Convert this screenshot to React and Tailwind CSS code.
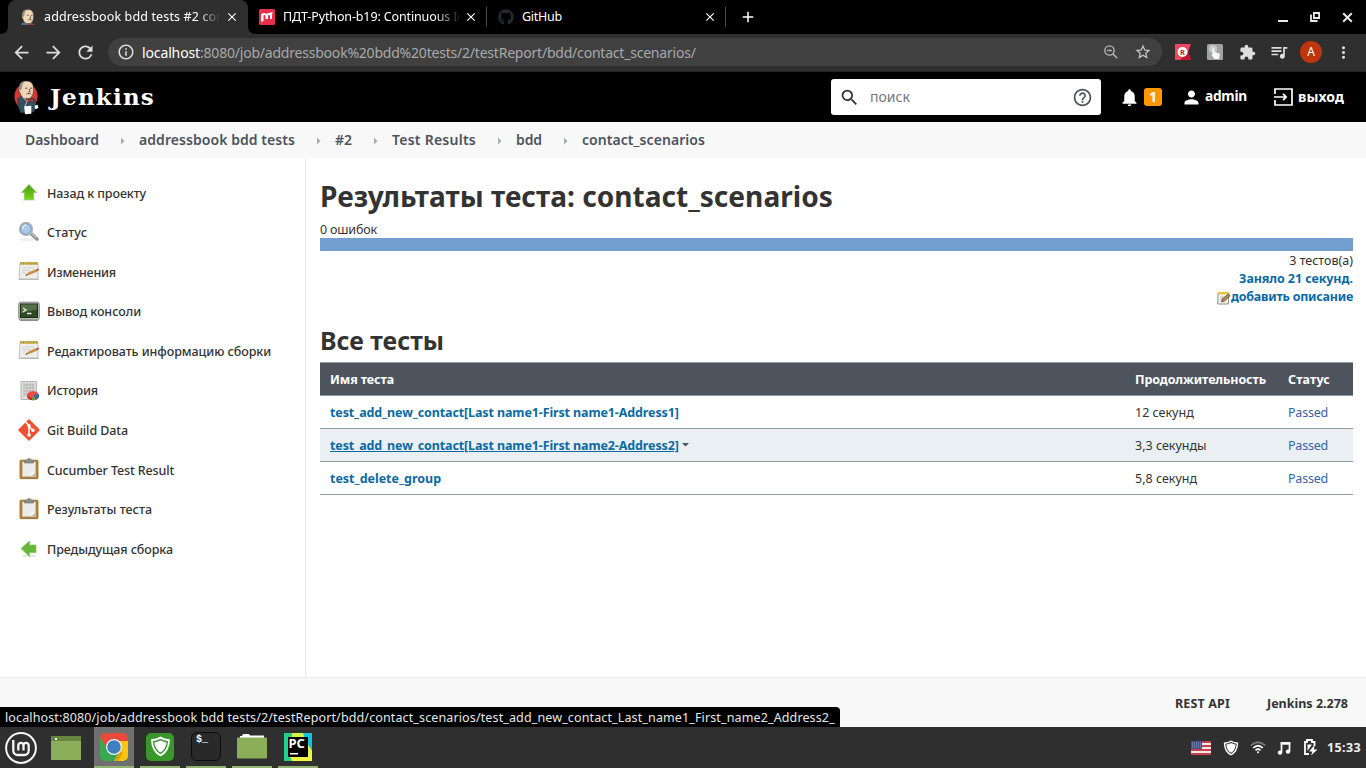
import React from 'react';
import {
  MdArrowBack, MdArrowForward, MdRefresh, MdInfoOutline, MdStarBorder, MdExtension,
  MdQueueMusic, MdMoreVert, MdSearch, MdHelpOutline, MdNotifications, MdPerson, MdClose, MdAdd,
} from 'react-icons/md';
import { FaGithub } from 'react-icons/fa';

function JenkinsHead({ className, full }) {
  return (
    <svg className={className} viewBox={full ? '0 0 26 36' : '4 0 18 21'}>
      {full && <ellipse cx="12.5" cy="17" rx="12" ry="13.5" fill="#d33833" />}
      <path d="M4 19l5-3 8 2 5 2 1 6-2 7-14 1-2-5-1-5z" fill={full ? '#335061' : '#49728b'} stroke="#1d2b33" strokeWidth=".5" />
      <path d="M5.5 8C5.5 3 9 .8 13 .8c5 0 7.300 3 7.300 8 0 6-1.500 10-6 10.500-4 .3-7-2-7.800-6-1.500-1-1.600-3-1-5.300z" fill="#f0d6b7" stroke="#3b3027" strokeWidth=".6" />
      <path d="M5.700 9.500C4.800 4 8 1 12 .8 9 2.500 8.500 5 8.200 8.300L7 11z" fill="#8d8f8c" />
      <path d="M11.500 8.300h2.500M16.700 8.300h2.300M15.800 9l1 3-1.800.3M13 14.500c1.500-1 4-.8 5 .2" fill="none" stroke="#4b3b30" strokeWidth=".9" />
      <path d="M13 18.800l3.500 1.700 3.800-1.500-.3 4-3.500-1.500-3.500 1.800z" fill="#d33833" stroke="#6d1512" strokeWidth=".4" />
      {full && <path d="M10.500 27l7.500-.5V35l-6.500.5z" fill="#fff" />}
      {full && <path d="M21.500 26.500l3-1 1 3.500-3.500 1.200z" fill="#fff" />}
      {full && <path d="M9 17.500l4.500 4.500-2 5" stroke="#fff" strokeWidth=".7" fill="none" />}
    </svg>
  );
}

function Tab({ icon, title, titleClass, closeClass }) {
  return (
    <>
      <span className="flex w-4 shrink-0">{icon}</span>
      <span className={'ml-2 shrink-0 overflow-hidden whitespace-nowrap text-[12.5px] ' + titleClass}>{title}</span>
      <MdClose className={'size-3.5 shrink-0 text-white ' + closeClass} />
    </>
  );
}

function Browser() {
  return (
    <header className="h-[72px] shrink-0 bg-black">
      <div className="flex h-[34px] items-center justify-between">
        <div className="flex h-full items-center text-white">
          <svg className="w-2 self-end" height="8" viewBox="0 0 8 8"><path d="M8 0v8H0c5 0 8-3 8-8z" fill="#2f2f2f" /></svg>
          <div className="flex h-full w-[240px] items-center rounded-t-lg bg-[#2f2f2f] pl-3">
            <Tab
              icon={<JenkinsHead className="size-4" />}
              title="addressbook bdd tests #2 contact"
              titleClass="w-[176px] pt-px tracking-[0.13px] [mask-image:linear-gradient(to_right,black_155px,transparent_176px)]"
              closeClass="ml-[5px]"
            />
          </div>
          <svg className="w-2 self-end" height="8" viewBox="0 0 8 8"><path d="M0 0v8h8C3 8 0 5 0 0z" fill="#2f2f2f" /></svg>
          <div className="flex w-[230px] items-center pl-[3px]">
            <Tab
              icon={<svg className="size-4" viewBox="0 0 16 16"><rect width="16" height="16" rx="1.500" fill="#e8304a" /><path d="M2 13V6.500Q2 4 5 4q1.500 0 2.300 1Q8.200 4 10 4l3.500-1-.5 3.500V10h-2V7q0-1-1-1T9 7v3H6.500V7q0-1-1-1T4.500 7v5z" fill="#fff" /></svg>}
              title="ПДТ-Python-b19: Continuous Integration"
              titleClass="w-[176px] pt-px tracking-[-0.13px] [mask-image:linear-gradient(to_right,black_152px,transparent_178px)]"
              closeClass="ml-[5px]"
            />
          </div>
          <div className="flex h-5 w-[239px] items-center border-l border-[#4b4b4b] pl-[11px]">
            <Tab icon={<FaGithub className="size-4 text-[#24292e]" />} title="GitHub" titleClass="w-[176px] pt-px tracking-[-0.25px]" closeClass="ml-[5px]" />
          </div>
          <div className="flex h-5 items-center border-l border-[#4b4b4b] pl-[13px]"><MdAdd className="size-[18px]" /></div>
        </div>
        <div className="flex items-center gap-[22px] pr-[13px] text-[#e8e8e8]">
          <svg className="size-[10px]" viewBox="0 0 10 10"><path d="M0 8h10v2H0z" fill="currentColor" /></svg>
          <svg className="size-[10px]" viewBox="0 0 10 10"><path d="M3.900 1h5.200v5H3.900zM1 2.500V9h6.500" stroke="currentColor" strokeWidth="1.800" fill="none" /></svg>
          <svg className="size-[11px]" viewBox="0 0 11 11"><path d="M1.200 1.200l8.600 8.600M9.800 1.200L1.200 9.800" stroke="currentColor" strokeWidth="2" /></svg>
        </div>
      </div>
      <div className="flex h-[38px] items-center border-b border-[#222] bg-[#2f2f2f] pb-px text-[#dedede]">
        <MdArrowBack className="ml-[11px] size-[21px]" />
        <MdArrowForward className="ml-[11px] size-[21px]" />
        <MdRefresh className="ml-[11px] size-[21px]" />
        <div className="ml-3 flex h-7 w-[1054px] items-center rounded-full bg-[#404040] pr-2.5 pl-[9px] text-[14px]">
          <MdInfoOutline className="size-[18px]" />
          <span className="ml-[7px] w-[58px] tracking-[-0.13px] text-white">localhost</span>
          <span className="flex-1 tracking-[-0.21px] whitespace-nowrap text-[#a9a9a9]">:8080/job/addressbook%20bdd%20tests/2/testReport/bdd/contact_scenarios/</span>
          <svg className="size-[14px]" viewBox="0 0 14 14"><circle cx="5.500" cy="5.500" r="4.600" fill="none" stroke="#b5b5b5" strokeWidth="1.400" /><path d="M3.200 5.500h4.600M8.800 8.800l4.400 4.400" stroke="#b5b5b5" strokeWidth="1.500" /></svg>
          <MdStarBorder className="ml-4 size-[18px] text-[#c9c9c9]" />
        </div>
        <svg className="ml-[13px] size-4" viewBox="0 0 16 16">
          <path d="M0 0h16l-3 8 3 8H0z" fill="#ef4562" /><path d="M5 16h11l-3-8z" fill="#c4142f" />
          <circle cx="7.500" cy="8" r="5" fill="#fff" />
          <text x="7.500" y="10.700" textAnchor="middle" fontSize="7.500" fontWeight="700" fontFamily="Noto Sans" fill="#c4142f">R</text>
        </svg>
        <svg className="ml-4 size-4" viewBox="0 0 16 16">
          <rect width="16" height="16" rx="1.500" fill="#a2a2a2" /><circle cx="6" cy="5" r="4" fill="#c8c8c8" />
          <path d="M5.500 4.500q1-1 1.800 0V8l4.700 1.200q1 .3.800 1.500L12 15H7.500L4 10.500l1.500-.2z" fill="#f4f8ff" />
        </svg>
        <MdExtension className="ml-4 size-[17px]" />
        <MdQueueMusic className="ml-[13px] size-5" />
        <span className="ml-[11px] flex size-[22px] items-center justify-center rounded-full bg-[#c0350d] text-[12px] text-white">A</span>
        <MdMoreVert className="ml-3 size-[19px]" />
      </div>
    </header>
  );
}

function JenkinsHeader() {
  return (
    <div className="flex h-[50px] shrink-0 items-center bg-black text-[14px] font-bold text-white">
      <JenkinsHead full className="ml-3.5 h-[35px] w-[25px]" />
      <span className="ml-[11px] w-[781px] pb-px font-['DejaVu_Serif'] text-[23px] leading-none tracking-[1.2px]">Jenkins</span>
      <div className="flex h-9 w-[270px] items-center rounded-[3px] bg-white pr-2 pl-2 font-normal">
        <MdSearch className="size-[21px] text-[#333]" />
        <span className="ml-2.5 flex-1 pb-0.5 text-[#757575]">поиск</span>
        <MdHelpOutline className="size-[21px] text-[#4d545d]" />
      </div>
      <MdNotifications className="ml-[18px] size-[21px]" />
      <span className="ml-1 flex h-[18px] w-[18px] items-center justify-center rounded-[3px] bg-[#ff9800] pb-px">1</span>
      <MdPerson className="ml-[19px] size-[21px]" />
      <span className="ml-[3px] w-[69px] pb-0.5 text-[13.700px] tracking-[-0.25px]">admin</span>
      <svg className="h-[18px] w-[19px]" viewBox="0 0 19 18"><path d="M1 6V1h17v16H1v-5M0 9h11.500M9 5.800L12.200 9 9 12.200" fill="none" stroke="#fff" strokeWidth="1.700" /></svg>
      <span className="ml-[5px] pb-0.5 tracking-[0.09px]">выход</span>
    </div>
  );
}

const crumbs = [
  ['Dashboard', 'w-[114px] tracking-[-0.05px]'],
  ['addressbook bdd tests', 'w-[196px] tracking-[0.06px]'],
  ['#2', 'w-[57px]'],
  ['Test Results', 'w-[124px] tracking-[0.25px]'],
  ['bdd', 'w-[66px] tracking-[-0.1px]'],
  ['contact_scenarios', 'tracking-[0.06px]'],
];

function Breadcrumbs() {
  return (
    <nav className="flex h-9 shrink-0 items-center bg-[#f8f8f8] pl-[25px] text-[14px] font-semibold text-[#4d545d]">
      {crumbs.map(([t, cls], i) => (
        <span key={t} className={'flex items-center justify-between whitespace-nowrap ' + cls}>
          <span className="pb-0.5">{t}</span>
          {i < 5 && <svg className="mr-3.5 mt-px h-2 w-1" viewBox="0 0 4 8"><path d="M0 .500L3.500 4 0 7.500z" fill="#a9adb2" /></svg>}
        </span>
      ))}
    </nav>
  );
}

function Arrow({ left }) {
  return (
    <svg className="size-[22px]" viewBox="0 0 22 22">
      <defs><linearGradient id="green" x2="0" y2="1"><stop stopColor="#4b9c1f" /><stop offset="1" stopColor="#7cd313" /></linearGradient></defs>
      <ellipse cx="11" cy="18" rx="8" ry="1.200" fill="#e4e8e0" />
      {left
        ? <path d="M3 10.500L11.500 3v4H18v7.500h-6.500v4z" fill="#67b63a" stroke="#88c766" strokeWidth=".8" />
        : <path d="M11 2.500L18.500 10.500H15.500V17.500h-9V10.500h-3z" fill="url(#green)" stroke="#86c65c" strokeWidth=".8" />}
    </svg>
  );
}
function Magnifier() {
  return (
    <svg className="size-[22px]" viewBox="0 0 22 22">
      <ellipse cx="9" cy="18.500" rx="8" ry="1.500" fill="#eee" />
      <path d="M13.500 13l5.500 5" stroke="#8e8e8e" strokeWidth="3.600" strokeLinecap="round" />
      <path d="M13.500 12.500l5 4.500" stroke="#c5c5c5" strokeWidth="1.200" />
      <circle cx="8" cy="8" r="6.200" fill="#a9c8ee" stroke="#b4b4b4" strokeWidth="2" />
      <circle cx="8" cy="8" r="5.200" fill="none" stroke="#6f96c8" strokeWidth=".8" />
      <path d="M4.500 8a4 4 0 0 1 4-4" stroke="#e6f0fc" strokeWidth="1.500" fill="none" />
    </svg>
  );
}
function Notepad() {
  return (
    <svg className="size-[22px]" viewBox="0 0 22 22">
      <path d="M2 2.500h18V18.500H1z" fill="#eeeeec" stroke="#b5b5b2" strokeWidth=".8" />
      <path d="M1 17.500h19.500V19H1z" fill="#b9b9b7" />
      <path d="M2 1.200h18v2.500H2z" fill="#c9b04b" />
      <path d="M3 1v2.500M5.500 1v2.500M8 1v2.500M10.500 1v2.500M13 1v2.500M15.500 1v2.500M18 1v2.500" stroke="#a3892d" strokeWidth=".8" />
      <path d="M4 7h12M4 9.500h8M4 12h4" stroke="#c6c6c4" strokeWidth=".8" />
      <path d="M8 14.200l3-2.700 7.500-3.100 1 1.700-7.500 3.100z" fill="#d99536" stroke="#94672a" strokeWidth=".5" />
      <path d="M18.300 8.200l1.800-.7q1.200.5.9 1.600l-1.500.8z" fill="#d64937" />
      <path d="M6.800 14.800l2-1.500.9 1z" fill="#444" />
    </svg>
  );
}
function Terminal() {
  return (
    <svg className="size-[22px]" viewBox="0 0 22 22">
      <rect x=".700" y="1.200" width="20.600" height="17.600" rx="2" fill="#b9bcb6" stroke="#888b85" />
      <rect x="2.500" y="3" width="17" height="13.500" fill="#2e4a25" stroke="#1e2b1b" />
      <path d="M3 3.500h16v5Q10 9.500 3 12.500z" fill="#55704b" />
      <path d="M5 7l3 2-3 2M9 12.500h4.500" stroke="#e4f0de" strokeWidth="1.300" fill="none" />
      <path d="M2 19.500h18" stroke="#8d8d8d" />
    </svg>
  );
}
function HistoryIcon() {
  return (
    <svg className="size-[22px]" viewBox="0 0 22 22">
      <path d="M3 1.500h15.500v18H3z" fill="#dededc" stroke="#b5b5b3" />
      <path d="M6 5h10.500M6 8h10.500M6 11h10.500M6 14h5M6 3v14M9 3v13M12 3v10M15 3v8" stroke="#a8a8a6" strokeWidth=".7" />
      <ellipse cx="15" cy="16" rx="6" ry="4.300" fill="#c91f1f" />
      <ellipse cx="15" cy="14.700" rx="5.600" ry="3.500" fill="#ed4c45" />
      <path d="M15 15l6-1q1 4-3 5.800z" fill="#3868ac" /><path d="M15 15l3 4.800q-2 .8-4 .3z" fill="#68a52d" />
    </svg>
  );
}
function GitIcon() {
  return (
    <svg className="size-[22px]" viewBox="0 0 22 22">
      <path d="M11 1l10 10-10 10L1 11z" fill="#f05133" stroke="#f05133" strokeWidth="1.600" strokeLinejoin="round" />
      <path d="M7.500 3l3.500 3.500v10M11 7.500l4 4" stroke="#fff" strokeWidth="1.500" fill="none" />
      <circle cx="11" cy="6.800" r="1.700" fill="#fff" /><circle cx="11" cy="16" r="1.800" fill="#fff" /><circle cx="15" cy="11.200" r="1.700" fill="#fff" />
    </svg>
  );
}
function Clipboard() {
  return (
    <svg className="mb-0.5 size-[22px]" viewBox="0 0 22 22">
      <path d="M1.500 21h19" stroke="#ddd" />
      <rect x="2" y="2.200" width="18" height="18.300" rx="1" fill="#b98336" stroke="#8f6424" strokeWidth=".8" />
      <path d="M4.500 4h13v14.500h-13z" fill="#ececea" stroke="#c9c9c7" strokeWidth=".6" />
      <path d="M17.500 13.500l-4.500 5h4.500z" fill="#bfbfbd" /><path d="M13 18.500l.5-4 4-1z" fill="#fff" />
      <path d="M6.500 5V2.500L9 2Q9.500.5 11 .5t2 1.500l2.500.5V5z" fill="#8b8f88" stroke="#6d716a" strokeWidth=".6" />
    </svg>
  );
}

const tasks = [
  ['Назад к проекту', Arrow, 'tracking-[-0.09px] pt-[3px]'],
  ['Статус', Magnifier, 'tracking-[0.1px] pt-0.5'],
  ['Изменения', Notepad, 'tracking-[-0.18px] pt-0.5'],
  ['Вывод консоли', Terminal, 'tracking-[-0.05px] pt-0.5'],
  ['Редактировать информацию сборки', Notepad, 'tracking-[-0.07px] pt-0.5'],
  ['История', HistoryIcon, 'tracking-[-0.17px] pt-0.5'],
  ['Git Build Data', GitIcon, 'tracking-[-0.11px] pt-0.5'],
  ['Cucumber Test Result', Clipboard, 'tracking-[-0.13px] pt-0.5'],
  ['Результаты теста', Clipboard, 'tracking-[0.04px] pt-0.5'],
];

function Sidebar() {
  return (
    <aside className="w-[306px] shrink-0 border-r border-[#ececec] pt-[15px] pl-[18px] text-[12.5px] font-medium text-[#333]">
      {tasks.map(([t, Icon, cls]) => (
        <div key={t} className="flex h-[39.6px] items-center gap-[7px]"><Icon /><span className={'whitespace-nowrap ' + cls}>{t}</span></div>
      ))}
      <div className="flex h-[39.6px] items-center gap-[7px]"><Arrow left /><span className="pt-0.5 tracking-[-0.1px]">Предыдущая сборка</span></div>
    </aside>
  );
}

const rows = [
  ['test_add_new_contact[Last name1-First name1-Address1]', '12 секунд', 'tracking-[-0.12px]'],
  ['test_add_new_contact[Last name1-First name2-Address2]', '3,3 секунды', 'tracking-[-0.12px]'],
  ['test_delete_group', '5,8 секунд', 'tracking-[-0.02px]'],
];

function Content() {
  return (
    <main className="flex-1 pr-[13px] pl-3.5 text-[12.5px] text-[#333]">
      <h1 className="mt-[18px] h-[44px] text-[28.1px] leading-[40px] font-bold whitespace-nowrap">Результаты теста: contact_scenarios</h1>
      <div className="h-[18px] leading-[20px] tracking-[-0.16px]">0 ошибок</div>
      <div className="h-[13px] bg-[#729fcf]" />
      <div className="h-[18px] text-right leading-[19px]">3 тестов(а)</div>
      <div className="h-[18px] text-right leading-[19px] font-bold tracking-[-0.09px] text-[#0b6aa2]">Заняло 21 секунд.</div>
      <div className="flex h-[18px] items-center justify-end leading-[18px] font-bold tracking-[-0.24px] text-[#0b6aa2]">
        <svg className="mt-[3px] size-3.5" viewBox="0 0 14 14">
          <path d="M1 2h10.500v11H.7z" fill="#efefed" stroke="#92928f" /><path d="M1 .800h11v2.500H1z" fill="#e6c739" />
          <path d="M3 6h4M3 8h2" stroke="#bbb" /><path d="M4.500 10.800l1-3L11.500 3l1.500 1.700L7.500 10z" fill="#b88c4b" stroke="#4c4030" strokeWidth=".8" />
        </svg>
        <span className="pt-0.5">добавить описание</span>
      </div>
      <h2 className="mt-[19px] h-[38px] text-[24.900px] leading-[32px] font-bold">Все тесты</h2>
      <div className="border-t border-[#8f9ea6]">
        <div className="flex h-[33px] items-center border-b border-[#8f9ea6] bg-[#4d545d] pt-0.5 pl-[10px] font-bold text-white">
          <span className="w-[805px] tracking-[-0.11px]">Имя теста</span><span className="w-[153px] tracking-[-0.1px]">Продолжительность</span><span className="tracking-[0.11px]">Статус</span>
        </div>
        {rows.map(([name, time, cls], i) => (
          <div key={name} className={'flex h-[33px] items-center border-b border-[#8f9ea6] pt-0.5 pl-[10px] ' + (i === 1 ? 'bg-[#e9eff2]' : '')}>
            <span className="flex w-[805px] items-center">
              <a className={'font-bold text-[#0b6aa2] ' + cls + (i === 1 ? ' underline underline-offset-1' : '')}>{name}</a>
              {i === 1 && <svg className="mb-[3px] ml-[3px] h-1 w-[7px]" viewBox="0 0 7 4"><path d="M0 0h7L3.500 3.500z" fill="#4d545d" /></svg>}
            </span>
            <span className="w-[153px]">{time}</span>
            <span className="tracking-[-0.21px] text-[#3465a4]">Passed</span>
          </div>
        ))}
      </div>
    </main>
  );
}

function AppTile({ children, active }) {
  return <div className={'mr-1.5 flex h-full w-10 items-center justify-center border-b-2 border-[#92b372] ' + (active ? 'bg-[#6f6f6f]' : '')}>{children}</div>;
}

function Shield({ className }) {
  return (
    <svg className={className} viewBox="0 0 20 20">
      <path d="M10 .500Q14 3 19 3q0 12-9 16.500Q1 15 1 3q5 0 9-2.500z" fill="#fff" />
      <path d="M10 3.200q3 1.700 6.500 2-.5 8-6.500 11.500-6-3.500-6.500-11.500 3.500-.3 6.500-2z" fill="none" stroke="#3a3a3a" strokeWidth="1.300" />
    </svg>
  );
}

function Taskbar() {
  return (
    <div className="flex h-[41px] shrink-0 items-center bg-[#2f2f2f]">
      <svg className="ml-[5px] size-8" viewBox="0 0 32 32">
        <circle cx="16" cy="16" r="14.900" fill="none" stroke="#f5f5f5" strokeWidth="2" />
        <path d="M8.300 8v10.500a4.500 4.500 0 0 0 4.500 4.500h6.400a4.500 4.500 0 0 0 4.500-4.500v-5a2.600 2.600 0 0 0-5.200 0v5M18.500 13.500a2.600 2.600 0 0 0-5.200 0v5" fill="none" stroke="#f5f5f5" strokeWidth="2.300" />
      </svg>
      <svg className="ml-3.5 h-6 w-[30px]" viewBox="0 0 30 24"><path d="M0 0h30v24H0z" fill="#8bae5a" /><path d="M0 0h30v5H0z" fill="#678540" /><path d="M4 2h2v2H4z" fill="#fff" /></svg>
      <div className="ml-[13px] flex h-full">
        <AppTile active>
          <svg className="size-7" viewBox="0 0 28 28">
            <clipPath id="tile"><rect width="28" height="28" rx="5" /></clipPath>
            <g clipPath="url(#tile)">
              <path d="M0 0h28v28H0z" fill="#38a853" /><path d="M14 8h14v20H14l6-10z" fill="#fbc413" />
              <path d="M14 28l6-10 3 2-5 8z" fill="#d9a50b" /><path d="M0 0h28v8H14L8 17 0 4z" fill="#e8493a" />
            </g>
            <circle cx="14" cy="14" r="8" fill="#f4f4f4" /><circle cx="14" cy="14" r="6.800" fill="#3f7fc0" />
          </svg>
        </AppTile>
        <AppTile>
          <span className="flex size-7 items-center justify-center rounded-[5px] bg-[#38962a]">
            <svg className="size-[21px]" viewBox="0 0 20 20">
              <path d="M10 .500Q14 3 19 3q0 12-9 16.500Q1 15 1 3q5 0 9-2.500z" fill="#fff" />
              <path d="M10 3.500q3 1.700 6.500 2-.5 7.500-6.500 11-6-3.500-6.500-11 3.500-.3 6.500-2z" fill="#fff" stroke="#38962a" strokeWidth="1.300" />
            </svg>
          </span>
        </AppTile>
        <AppTile>
          <span className="flex h-[29px] w-[30px] rounded-[6px] border border-[#0c0c0c] bg-[#292929] pt-0.5 pl-1 font-['Liberation_Mono'] text-[10px] leading-[10px] font-bold text-white">$_</span>
        </AppTile>
        <AppTile>
          <svg className="h-[25px] w-[30px]" viewBox="0 0 30 25"><path d="M3 4V2h2l1-2h6l1 1.500h14V4z" fill="#fff" /><rect y="3.500" width="30" height="21" rx="1" fill="#8bae5a" /></svg>
        </AppTile>
        <AppTile>
          <svg className="size-7" viewBox="0 0 28 28">
            <path d="M0 0h28v28H0z" fill="#22d18c" /><path d="M8 0h16l4 14v14H8z" fill="#d7f14a" /><path d="M19 0h9v18l-6-9z" fill="#12c1dc" /><path d="M5 28l3-8h20v8z" fill="#f1f63f" /><path d="M24 12l4 6v10z" fill="#f1f63f" /><path d="M0 12l8 16H0z" fill="#22d18c" />
            <path d="M4 4h20v20H4z" fill="#000" />
            <text x="4.500" y="15" fontFamily="Noto Sans" fontSize="13" fontWeight="700" fill="#fff">PC</text><path d="M6 20h8v1.500H6z" fill="#fff" />
          </svg>
        </AppTile>
      </div>
      <div className="ml-auto flex items-center pr-[5px]">
        <svg className="h-3.5 w-5" viewBox="0 0 20 14">
          <path d="M0 0h20v14H0z" fill="#f1e9e9" /><path d="M0 1h20M0 5h20M0 9h20M0 13h20" stroke="#c8414b" strokeWidth="2" /><path d="M0 0h11v8H0z" fill="#3f5187" />
          <path d="M1 2h9M1 4h9M1 6h9" stroke="#a8b2cf" strokeWidth=".8" strokeDasharray="1 1" />
        </svg>
        <Shield className="ml-3 size-4" />
        <svg className="ml-[11px] h-[13px] w-4" viewBox="0 0 16 13" fill="none" stroke="#fff" strokeWidth="1.700">
          <path d="M.8 4.500Q8-2 15.200 4.500" stroke="#777" /><path d="M3.200 7Q8 2.500 12.800 7M5.500 9.300Q8 7 10.500 9.300" /><circle cx="8" cy="11.300" r="1" fill="#fff" stroke="none" />
        </svg>
        <svg className="ml-[11px] size-3.5" viewBox="0 0 14 14"><path d="M4.500 11.500V2h8v8.500" fill="none" stroke="#fff" strokeWidth="1.700" /><path d="M3.700 1.200h9.600v2.500H3.700z" fill="#fff" /><circle cx="3" cy="11.600" r="2.200" fill="#fff" /><circle cx="11" cy="10.600" r="2.200" fill="#fff" /></svg>
        <svg className="ml-3 h-[17px] w-[15px]" viewBox="0 0 15 17"><path d="M6 15H2V3h2V1h5v2h2.500v4" fill="none" stroke="#fff" strokeWidth="1.800" /><path d="M4.500 5.500h4.500L4.500 12z" fill="#fff" /><path d="M11.500 6L6 12.500h3.500L8 16.500l6.500-6H11z" fill="#fff" /></svg>
        <span className="ml-[9px] w-[34px] pt-0.5 text-[12.5px] font-bold tracking-[0.38px] whitespace-nowrap text-[#eee]">15:33</span>
      </div>
    </div>
  );
}

export default function App() {
  return (
    <div className="relative flex h-[768px] w-[1366px] flex-col overflow-hidden bg-white font-['Noto_Sans',sans-serif]">
      <Browser />
      <JenkinsHeader />
      <Breadcrumbs />
      <div className="flex h-[519px] shrink-0"><Sidebar /><Content /></div>
      <footer className="flex h-[50px] shrink-0 items-center justify-end border-t border-[#ececec] bg-[#f8f8f8] pr-[18px] pt-1 text-[12.5px] font-bold text-[#333]">
        <span className="w-[92px] tracking-[0.15px]">REST API</span><span>Jenkins 2.278</span>
      </footer>
      <Taskbar />
      <div className="absolute top-[707px] left-0 h-5 w-[840px] rounded-tr-[4px] bg-black pl-[5px] text-[12.5px] leading-[21px] tracking-[0.13px] whitespace-nowrap text-[#e8e8e8]">
        localhost:8080/job/addressbook bdd tests/2/testReport/bdd/contact_scenarios/test_add_new_contact_Last_name1_First_name2_Address2_
      </div>
    </div>
  );
}
